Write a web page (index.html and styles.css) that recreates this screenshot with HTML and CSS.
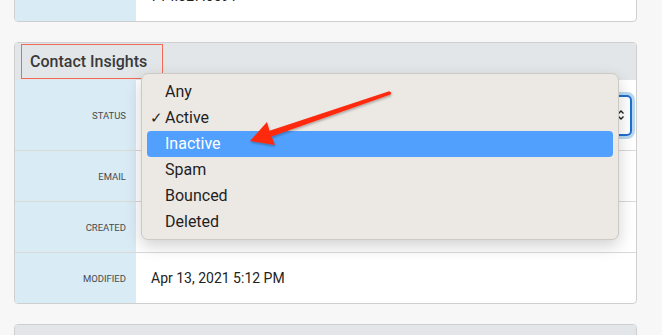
FILE: index.html
```html
<!DOCTYPE html>
<html lang="en">
<head>
    <meta charset="UTF-8">
    <meta name="viewport" content="width=device-width, initial-scale=1.0">
    <title>Contact Insights</title>
    <link rel="stylesheet" href="styles.css">
</head>
<body>
    <div class="page">
        <div class="card card-top">
            <div class="row row-last">
                <div class="label"></div>
                <div class="value">714.327.6591</div>
            </div>
        </div>

        <div class="card insights">
            <div class="card-header">
                <span class="title-box">Contact Insights</span>
            </div>
            <div class="row row-status">
                <div class="label">Status</div>
                <div class="value">
                    <div class="select">
                        <svg class="chevron" width="8" height="10" viewBox="0 0 8 10">
                            <path d="M1.5 3.5 L4 1 L6.5 3.5 M1.5 6.5 L4 9 L6.5 6.5" fill="none" stroke="#222" stroke-width="1.4"/>
                        </svg>
                    </div>
                </div>
            </div>
            <div class="row">
                <div class="label">Email</div>
                <div class="value"></div>
            </div>
            <div class="row">
                <div class="label">Created</div>
                <div class="value"></div>
            </div>
            <div class="row row-last">
                <div class="label">Modified</div>
                <div class="value">Apr 13, 2021 5:12 PM</div>
            </div>

            <ul class="menu">
                <li class="menu-item">Any</li>
                <li class="menu-item checked"><span class="check">✓</span>Active</li>
                <li class="menu-item selected">Inactive</li>
                <li class="menu-item">Spam</li>
                <li class="menu-item">Bounced</li>
                <li class="menu-item">Deleted</li>
            </ul>
        </div>

        <div class="card card-next">
            <div class="card-header"></div>
        </div>
    </div>

    <svg class="annotation" width="662" height="335" viewBox="0 0 662 335">
        <defs>
            <filter id="shadow" x="-10%" y="-30%" width="120%" height="160%">
                <feDropShadow dx="0.5" dy="1.5" stdDeviation="1.2" flood-color="#000" flood-opacity="0.3"/>
            </filter>
        </defs>
        <polygon filter="url(#shadow)" fill="#ff2a10"
                 points="250,141 267,122 269.5,130.8 389.2,91.2 391.2,92.4 390.6,94.6 271.5,136.6 275,145"/>
    </svg>
</body>
</html>
```

FILE: styles.css
```css
body {
    margin: 0;
    background: #f7f7f7;
    font-family: Roboto, "Liberation Sans", sans-serif;
    color: #222;
    position: relative;
    height: 335px;
    overflow: hidden;
}
.page {
    margin-top: -30px;
    padding: 0 25px 0 14px;
}
.card {
    background: #fff;
    border: 1px solid #cfcfcf;
    border-radius: 4px;
    margin-bottom: 20px;
}
.insights {
    position: relative;
}
.card-header {
    height: 37px;
    background: #e3e6e9;
    border-radius: 3px 3px 0 0;
    padding: 1px 0 0 6px;
    box-sizing: border-box;
}
.card-next .card-header {
    height: 60px;
}
.title-box {
    display: inline-flex;
    align-items: center;
    height: 35px;
    width: 142px;
    box-sizing: border-box;
    padding-left: 8px;
    border: 1.5px solid #f26a55;
    font-size: 16px;
    font-weight: 500;
    color: #3a3a3a;
}
.row {
    display: flex;
    height: 51px;
    box-sizing: border-box;
    border-bottom: 1px solid #d9d9d9;
}
.row-status {
    height: 71px;
}
.row-last {
    height: 50px;
    border-bottom: none;
}
.label {
    width: 121px;
    flex-shrink: 0;
    background: #d9ebf5;
    display: flex;
    align-items: center;
    justify-content: flex-end;
    padding-right: 10px;
    box-sizing: border-box;
    font-size: 9.5px;
    text-transform: uppercase;
    color: #4a4a4a;
}
.row-last .label {
    border-radius: 0 0 0 3px;
}
.value {
    flex: 1;
    display: flex;
    align-items: center;
    padding: 0 4px 0 15px;
    font-size: 14px;
    color: #222;
}
.select {
    flex: 1;
    height: 41px;
    box-sizing: border-box;
    border: 2px solid #1f6fd0;
    border-radius: 5px;
    box-shadow: 0 0 0 3px #b9d8ef;
    display: flex;
    align-items: center;
    justify-content: flex-end;
    padding-right: 5px;
}
.chevron {
    display: block;
}
.menu {
    position: absolute;
    left: 126px;
    top: 30px;
    width: 478px;
    height: 167px;
    box-sizing: border-box;
    margin: 0;
    padding: 5px 5px;
    list-style: none;
    background: #ece8e4;
    border: 1px solid #cdc9c5;
    border-radius: 7px;
    box-shadow: 0 6px 16px rgba(0, 0, 0, 0.18);
}
.menu-item {
    height: 26px;
    line-height: 26px;
    padding-left: 18px;
    border-radius: 4px;
    font-size: 16px;
    color: #1f1f1f;
    position: relative;
}
.menu-item.selected {
    background: #51a0fe;
    color: #fff;
}
.check {
    position: absolute;
    left: 3px;
    top: 0;
    font-size: 15px;
}
.annotation {
    position: absolute;
    left: 0;
    top: 0;
    pointer-events: none;
}
```
